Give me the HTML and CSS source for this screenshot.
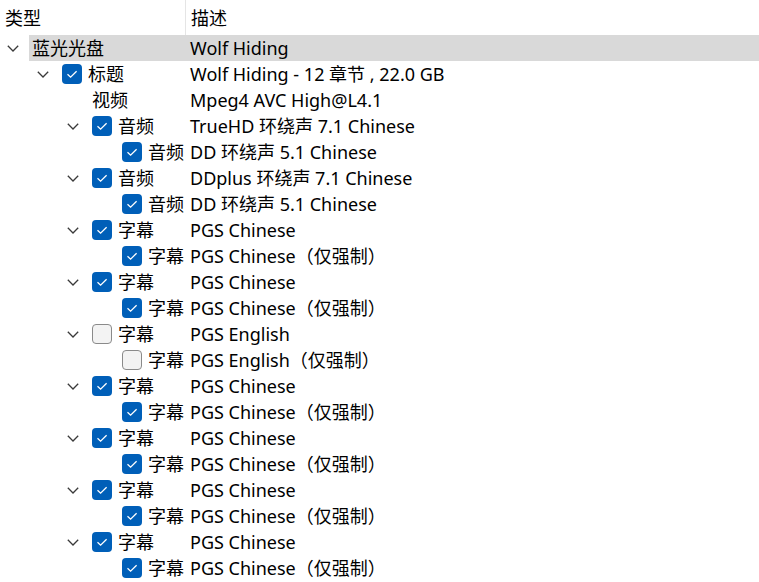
FILE: index.html
```html
<!DOCTYPE html>
<html lang="zh">
<head>
<meta charset="utf-8">
<title>Tree</title>
<link rel="stylesheet" href="styles.css">
</head>
<body>
<div class="tree">
  <div class="header">
    <div class="hcell type">类型</div>
    <div class="hcell desc">描述</div>
  </div>

  <div class="row selected l0">
    <div class="c1"><span class="chev"><svg viewBox="0 0 12 7"><path d="M0.8 0.8 L6 6 L11.2 0.8"/></svg></span><span class="lbl">蓝光光盘</span></div>
    <div class="c2">Wolf Hiding</div>
  </div>
  <div class="row l1">
    <div class="c1"><span class="chev"><svg viewBox="0 0 12 7"><path d="M0.8 0.8 L6 6 L11.2 0.8"/></svg></span><span class="cb on"><svg viewBox="0 0 20 20"><path d="M5.5 10.2 L8.6 13.2 L14.6 7.2"/></svg></span><span class="lbl">标题</span></div>
    <div class="c2">Wolf Hiding - 12 章节 , 22.0 GB</div>
  </div>
  <div class="row l2">
    <div class="c1"><span class="chev"></span><span class="lbl">视频</span></div>
    <div class="c2">Mpeg4 AVC High@L4.1</div>
  </div>
  <div class="row l2">
    <div class="c1"><span class="chev"><svg viewBox="0 0 12 7"><path d="M0.8 0.8 L6 6 L11.2 0.8"/></svg></span><span class="cb on"><svg viewBox="0 0 20 20"><path d="M5.5 10.2 L8.6 13.2 L14.6 7.2"/></svg></span><span class="lbl">音频</span></div>
    <div class="c2">TrueHD 环绕声 7.1 Chinese</div>
  </div>
  <div class="row l3">
    <div class="c1"><span class="chev"></span><span class="cb on"><svg viewBox="0 0 20 20"><path d="M5.5 10.2 L8.6 13.2 L14.6 7.2"/></svg></span><span class="lbl">音频</span></div>
    <div class="c2">DD 环绕声 5.1 Chinese</div>
  </div>
  <div class="row l2">
    <div class="c1"><span class="chev"><svg viewBox="0 0 12 7"><path d="M0.8 0.8 L6 6 L11.2 0.8"/></svg></span><span class="cb on"><svg viewBox="0 0 20 20"><path d="M5.5 10.2 L8.6 13.2 L14.6 7.2"/></svg></span><span class="lbl">音频</span></div>
    <div class="c2">DDplus 环绕声 7.1 Chinese</div>
  </div>
  <div class="row l3">
    <div class="c1"><span class="chev"></span><span class="cb on"><svg viewBox="0 0 20 20"><path d="M5.5 10.2 L8.6 13.2 L14.6 7.2"/></svg></span><span class="lbl">音频</span></div>
    <div class="c2">DD 环绕声 5.1 Chinese</div>
  </div>

  <div class="row l2">
    <div class="c1"><span class="chev"><svg viewBox="0 0 12 7"><path d="M0.8 0.8 L6 6 L11.2 0.8"/></svg></span><span class="cb on"><svg viewBox="0 0 20 20"><path d="M5.5 10.2 L8.6 13.2 L14.6 7.2"/></svg></span><span class="lbl">字幕</span></div>
    <div class="c2">PGS Chinese</div>
  </div>
  <div class="row l3">
    <div class="c1"><span class="chev"></span><span class="cb on"><svg viewBox="0 0 20 20"><path d="M5.5 10.2 L8.6 13.2 L14.6 7.2"/></svg></span><span class="lbl">字幕</span></div>
    <div class="c2">PGS Chinese（仅强制）</div>
  </div>
  <div class="row l2">
    <div class="c1"><span class="chev"><svg viewBox="0 0 12 7"><path d="M0.8 0.8 L6 6 L11.2 0.8"/></svg></span><span class="cb on"><svg viewBox="0 0 20 20"><path d="M5.5 10.2 L8.6 13.2 L14.6 7.2"/></svg></span><span class="lbl">字幕</span></div>
    <div class="c2">PGS Chinese</div>
  </div>
  <div class="row l3">
    <div class="c1"><span class="chev"></span><span class="cb on"><svg viewBox="0 0 20 20"><path d="M5.5 10.2 L8.6 13.2 L14.6 7.2"/></svg></span><span class="lbl">字幕</span></div>
    <div class="c2">PGS Chinese（仅强制）</div>
  </div>
  <div class="row l2">
    <div class="c1"><span class="chev"><svg viewBox="0 0 12 7"><path d="M0.8 0.8 L6 6 L11.2 0.8"/></svg></span><span class="cb off"></span><span class="lbl">字幕</span></div>
    <div class="c2">PGS English</div>
  </div>
  <div class="row l3">
    <div class="c1"><span class="chev"></span><span class="cb off"></span><span class="lbl">字幕</span></div>
    <div class="c2">PGS English（仅强制）</div>
  </div>
  <div class="row l2">
    <div class="c1"><span class="chev"><svg viewBox="0 0 12 7"><path d="M0.8 0.8 L6 6 L11.2 0.8"/></svg></span><span class="cb on"><svg viewBox="0 0 20 20"><path d="M5.5 10.2 L8.6 13.2 L14.6 7.2"/></svg></span><span class="lbl">字幕</span></div>
    <div class="c2">PGS Chinese</div>
  </div>
  <div class="row l3">
    <div class="c1"><span class="chev"></span><span class="cb on"><svg viewBox="0 0 20 20"><path d="M5.5 10.2 L8.6 13.2 L14.6 7.2"/></svg></span><span class="lbl">字幕</span></div>
    <div class="c2">PGS Chinese（仅强制）</div>
  </div>
  <div class="row l2">
    <div class="c1"><span class="chev"><svg viewBox="0 0 12 7"><path d="M0.8 0.8 L6 6 L11.2 0.8"/></svg></span><span class="cb on"><svg viewBox="0 0 20 20"><path d="M5.5 10.2 L8.6 13.2 L14.6 7.2"/></svg></span><span class="lbl">字幕</span></div>
    <div class="c2">PGS Chinese</div>
  </div>
  <div class="row l3">
    <div class="c1"><span class="chev"></span><span class="cb on"><svg viewBox="0 0 20 20"><path d="M5.5 10.2 L8.6 13.2 L14.6 7.2"/></svg></span><span class="lbl">字幕</span></div>
    <div class="c2">PGS Chinese（仅强制）</div>
  </div>
  <div class="row l2">
    <div class="c1"><span class="chev"><svg viewBox="0 0 12 7"><path d="M0.8 0.8 L6 6 L11.2 0.8"/></svg></span><span class="cb on"><svg viewBox="0 0 20 20"><path d="M5.5 10.2 L8.6 13.2 L14.6 7.2"/></svg></span><span class="lbl">字幕</span></div>
    <div class="c2">PGS Chinese</div>
  </div>
  <div class="row l3">
    <div class="c1"><span class="chev"></span><span class="cb on"><svg viewBox="0 0 20 20"><path d="M5.5 10.2 L8.6 13.2 L14.6 7.2"/></svg></span><span class="lbl">字幕</span></div>
    <div class="c2">PGS Chinese（仅强制）</div>
  </div>
  <div class="row l2">
    <div class="c1"><span class="chev"><svg viewBox="0 0 12 7"><path d="M0.8 0.8 L6 6 L11.2 0.8"/></svg></span><span class="cb on"><svg viewBox="0 0 20 20"><path d="M5.5 10.2 L8.6 13.2 L14.6 7.2"/></svg></span><span class="lbl">字幕</span></div>
    <div class="c2">PGS Chinese</div>
  </div>
  <div class="row l3">
    <div class="c1"><span class="chev"></span><span class="cb on"><svg viewBox="0 0 20 20"><path d="M5.5 10.2 L8.6 13.2 L14.6 7.2"/></svg></span><span class="lbl">字幕</span></div>
    <div class="c2">PGS Chinese（仅强制）</div>
  </div>
</div>
</body>
</html>
```

FILE: styles.css
```css
* { box-sizing: border-box; }
html, body { margin: 0; padding: 0; background: #ffffff; }
body {
  font-family: "Noto Sans", "Noto Sans CJK SC", sans-serif;
  font-size: 18px;
  color: #000000;
  width: 759px;
  height: 582px;
  overflow: hidden;
}
.tree { display: flex; flex-direction: column; }
.header {
  display: grid;
  grid-template-columns: 186px 1fr;
  height: 35px;
}
.hcell {
  display: flex;
  align-items: center;
  padding-bottom: 1px;
}
.hcell.type { padding-left: 5px; border-right: 1px solid #e5e5e5; }
.hcell.desc { padding-left: 5px; }

.row {
  display: grid;
  grid-template-columns: 186px 1fr;
  height: 26px;
  align-items: center;
  white-space: nowrap;
  line-height: 24px;
}
.row.selected {
  background: linear-gradient(to right, transparent 29px, #d9d9d9 29px);
}
.c1 {
  display: flex;
  align-items: center;
  overflow: hidden;
  height: 26px;
}
.c2 { padding-left: 4px; padding-bottom: 1px; }
.lbl { flex: 0 0 auto; padding-bottom: 1px; }
.l0 .c1 { padding-left: 0; }
.l1 .c1 { padding-left: 30px; }
.l2 .c1 { padding-left: 60px; }
.l3 .c1 { padding-left: 90px; }

.chev {
  flex: 0 0 32px;
  display: flex;
  align-items: center;
  padding-left: 7px;
}
.chev svg { width: 12px; height: 7px; }
.chev path { fill: none; stroke: #3a3a3a; stroke-width: 1.3; }

.cb {
  flex: 0 0 20px;
  width: 20px;
  height: 20px;
  border-radius: 4px;
  margin-right: 6px;
  display: flex;
}
.cb.on { background: #005fb8; }
.cb.off { background: #f3f3f3; border: 1px solid #8a8a8a; }
.cb svg { width: 20px; height: 20px; }
.cb path { fill: none; stroke: #ffffff; stroke-width: 1.3; }
```
